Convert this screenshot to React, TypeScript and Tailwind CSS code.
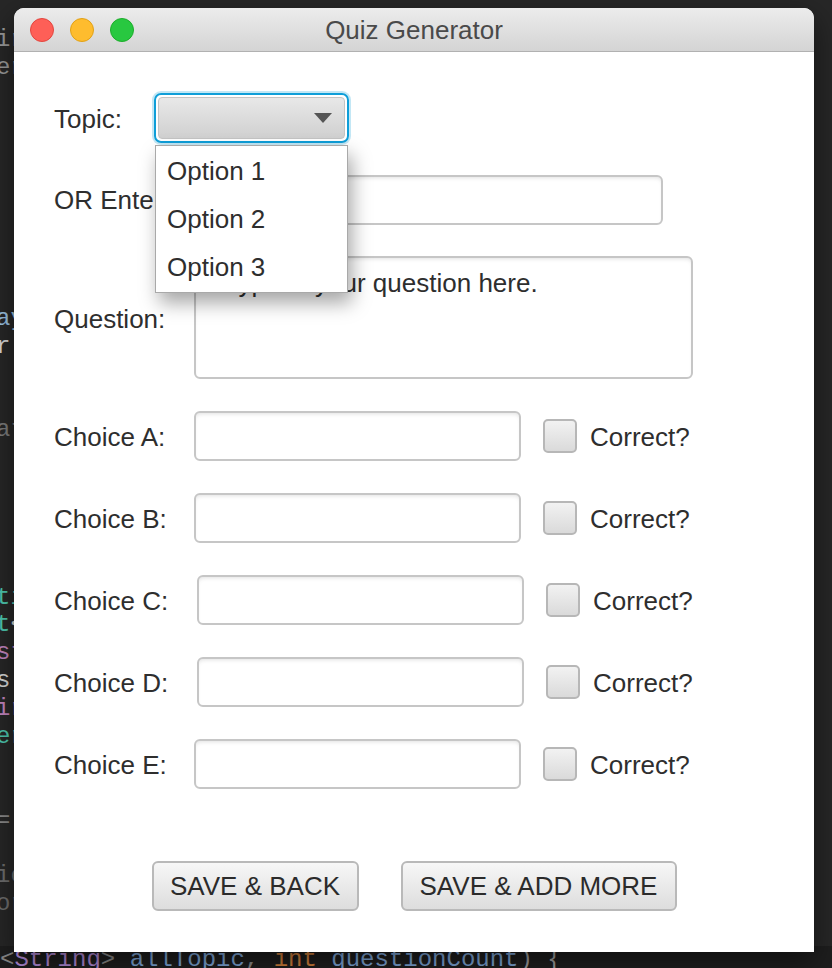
import React from "react";

type Part = { t: string; c: string };

// editor lines peeking out behind the window (index -> coloured parts)
const editorLines: Record<number, Part[]> = {
  0: [{ t: "ir", c: "#9a9a9a" }],
  1: [{ t: "er", c: "#9a9a9a" }],
  10: [{ t: "ay", c: "#9cc4e4" }],
  11: [{ t: "r;", c: "#d8d8d8" }],
  14: [{ t: "at", c: "#7c7c7c" }],
  20: [{ t: "ti", c: "#4ec9b0" }],
  21: [{ t: "t", c: "#4ec9b0" }, { t: "<", c: "#d8d8d8" }],
  22: [{ t: "st", c: "#c586c0" }],
  23: [{ t: "s", c: "#d8d8d8" }, { t: "(", c: "#e5c07b" }],
  24: [{ t: "ir", c: "#c586c0" }],
  25: [{ t: "er", c: "#4ec9b0" }],
  28: [{ t: "=", c: "#8a8a8a" }],
  30: [{ t: "io", c: "#6e6e6e" }],
  31: [{ t: "or", c: "#6e6e6e" }],
};

const choices = [
  { label: "Choice A:", shift: "ml-0" },
  { label: "Choice B:", shift: "ml-0" },
  { label: "Choice C:", shift: "ml-[3px]" },
  { label: "Choice D:", shift: "ml-[3px]" },
  { label: "Choice E:", shift: "ml-0" },
];

const field =
  "h-[50px] rounded-[6px] border-2 border-[#c6c6c6] bg-white shadow-[inset_0_3px_4px_-2px_rgba(0,0,0,0.12)]";

const Button = ({ label, width }: { label: string; width: string }) => (
  <button
    className={`${width} h-[50px] rounded-[6px] border-2 border-[#b9b9b9] bg-gradient-to-b from-[#f7f7f7] to-[#dddddd] text-[26px] text-[#2b2b2b]`}
  >
    {label}
  </button>
);

export default function App() {
  return (
    <div className="relative h-[968px] w-[832px] overflow-hidden bg-[#272727] font-['Liberation_Mono',monospace]">
      {/* code editor behind */}
      <div className="pt-[26px] text-[24px] leading-[27.88px]">
        {Array.from({ length: 33 }).map((_, i) => (
          <div key={i} className="ml-[-4px] h-[27.88px] whitespace-pre">
            {(editorLines[i] || []).map((p, j) => (
              <span key={j} style={{ color: p.c }}>
                {p.t}
              </span>
            ))}
          </div>
        ))}
        <div className="h-[27.88px] whitespace-pre bg-[#1e1e1e]">
          <span className="text-[#8a8a8a]">&lt;</span>
          <span className="text-[#b38bd9]">String</span>
          <span className="text-[#8a8a8a]">&gt; </span>
          <span className="text-[#7fa7d9]">allTopic</span>
          <span className="text-[#8a8a8a]">, </span>
          <span className="text-[#d2803c]">int</span>
          <span className="text-[#7fa7d9]"> questionCount</span>
          <span className="text-[#a0a0a0]">) {"{"}</span>
        </div>
      </div>

      {/* application window */}
      <div className="absolute left-[14px] top-[8px] flex h-[944px] w-[800px] flex-col overflow-hidden rounded-t-[10px] bg-white font-['Liberation_Sans',Arial,sans-serif] shadow-[0_10px_30px_rgba(0,0,0,0.5)]">
        <div className="relative flex h-[44px] shrink-0 items-center border-b border-[#b1b1b1] bg-gradient-to-b from-[#ececec] to-[#d4d4d4] px-[16px]">
          <div className="flex gap-[16px]">
            <span className="h-[24px] w-[24px] rounded-full border border-[#e2463f] bg-[#fe5f57]" />
            <span className="h-[24px] w-[24px] rounded-full border border-[#e1a116] bg-[#febc2e]" />
            <span className="h-[24px] w-[24px] rounded-full border border-[#1dad2b] bg-[#28c840]" />
          </div>
          <div className="flex-1 pr-[104px] pt-[2px] text-center text-[26px] text-[#4a4a4a]">Quiz Generator</div>
        </div>

        <div className="relative flex flex-col pl-[40px] pt-[41px] text-[26px] text-[#2e2e2e]">
          {/* topic */}
          <div className="flex h-[50px] items-center">
            <span className="w-[100px] pt-[2px]">Topic:</span>
            <div className="relative h-[50px] w-[195px] rounded-[7px] border-2 border-[#0f9ed8] p-[2px] shadow-[0_0_0_2px_rgba(15,158,216,0.25)]">
              <div className="flex h-full w-full items-center justify-end rounded-[4px] border border-[#c4c4c4] bg-gradient-to-b from-[#e8e8e8] to-[#d0d0d0] pr-[12px]">
                <svg width="18" height="10" viewBox="0 0 18 10">
                  <path d="M0 0 L18 0 L9 10 Z" fill="#555555" />
                </svg>
              </div>
              {/* open popup */}
              <div className="absolute left-[-1px] top-[50px] z-10 flex w-[193px] flex-col border-[1.5px] border-[#a9a9a9] bg-white py-[1px] shadow-[4px_10px_18px_rgba(0,0,0,0.35)]">
                {["Option 1", "Option 2", "Option 3"].map((o) => (
                  <div key={o} className="flex h-[48px] items-center px-[11px]">
                    {o}
                  </div>
                ))}
              </div>
            </div>
          </div>

          {/* new topic */}
          <div className="mt-[32px] flex h-[50px] items-center">
            <span className="w-[276px] whitespace-nowrap">OR Enter New Topic:</span>
            <div className={`${field} w-[333px]`} />
          </div>

          {/* question */}
          <div className="mt-[31px] flex h-[123px] items-center">
            <span className="w-[140px] pt-[4px]">Question:</span>
            <div className={`${field} h-[123px] w-[499px] pl-[28px] pt-[9px] leading-[32px]`}>
              Type in your question here.
            </div>
          </div>

          {/* choices */}
          {choices.map((c) => (
            <div key={c.label} className="mt-[32px] flex h-[50px] items-center">
              <span className="w-[140px] pt-[2px]">{c.label}</span>
              <div className={`flex items-center ${c.shift}`}>
                <div className={`${field} w-[327px]`} />
                <div className="ml-[22px] h-[34px] w-[34px] rounded-[5px] border-2 border-[#b7b7b7] bg-gradient-to-b from-[#f2f2f2] to-[#dadada]" />
                <span className="ml-[13px] pt-[2px]">Correct?</span>
              </div>
            </div>
          ))}

          {/* actions */}
          <div className="mt-[72px] flex justify-center gap-[42px] pr-[40px]">
            <Button label="SAVE & BACK" width="w-[207px]" />
            <Button label="SAVE & ADD MORE" width="w-[276px]" />
          </div>
        </div>
      </div>
    </div>
  );
}
